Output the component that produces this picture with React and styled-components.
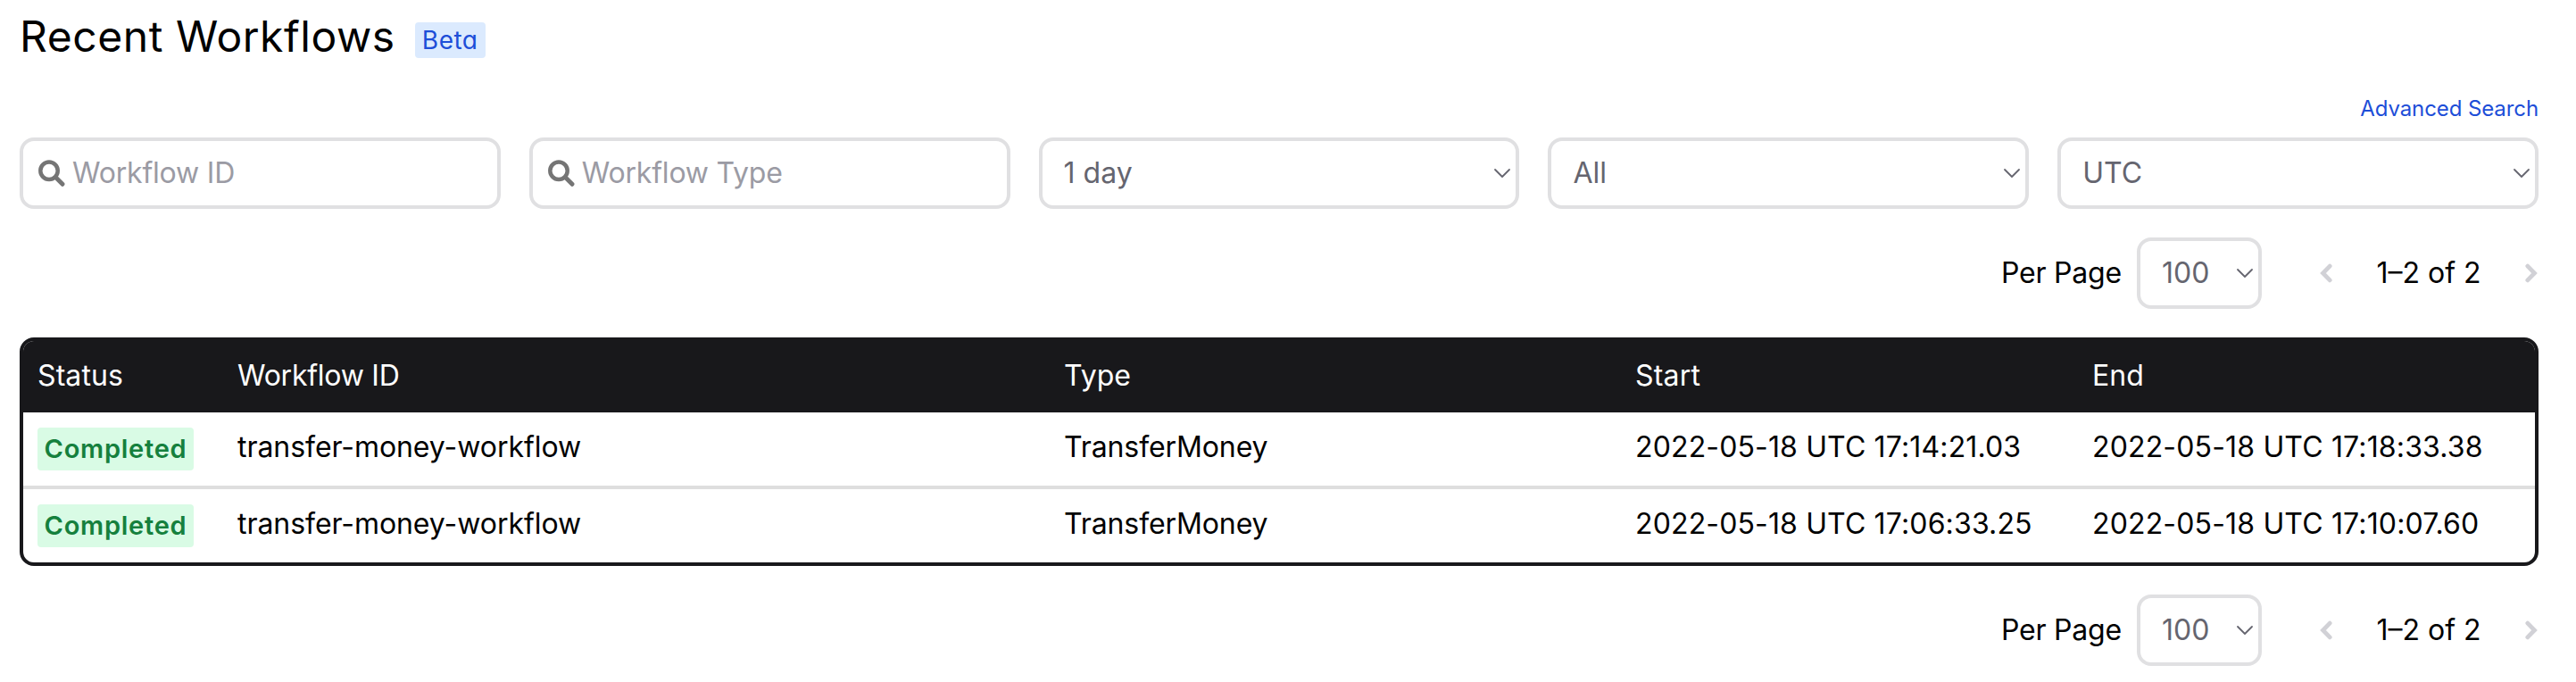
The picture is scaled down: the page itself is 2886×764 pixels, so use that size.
import React from 'react';
import styled, { createGlobalStyle } from 'styled-components';

const GlobalStyle = createGlobalStyle`
  *, *::before, *::after { box-sizing: border-box; }
  body {
    margin: 0;
    background: #fff;
    color: #000;
    font-family: Inter, 'Liberation Sans', sans-serif;
    font-size: 32px;
    line-height: 48px;
  }
`;

const Page = styled.main`
  display: flex;
  flex-direction: column;
  padding: 6px 42px 0 22px;
`;

const Header = styled.header`
  display: flex;
  align-items: center;
  gap: 22px;
  height: 72px;
`;

const Title = styled.h1`
  margin: 0;
  padding-bottom: 2px;
  font-size: 48px;
  font-weight: 430;
  line-height: 70px;
  letter-spacing: 0.55px;
  font-feature-settings: 'cv11';
`;

const Badge = styled.span`
  display: inline-flex;
  align-items: center;
  justify-content: center;
  width: ${(p) => p.$width};
  height: ${(p) => p.$height};
  border-radius: 4px;
  background: ${(p) => p.$bg};
  color: ${(p) => p.$fg};
  font-size: ${(p) => p.$size};
  font-weight: ${(p) => p.$weight};
  letter-spacing: ${(p) => p.$tracking};
  font-feature-settings: 'cv11';
`;

const BetaBadge = styled(Badge)`
  margin-top: 6px;
  padding-bottom: 1px;
`;

const LinkRow = styled.div`
  display: flex;
  justify-content: flex-end;
  height: 76px;
  padding-top: 26px;
`;

const SearchLink = styled.a`
  color: #1d4ed8;
  font-size: 24px;
  line-height: 36px;
  letter-spacing: -0.1px;
  text-decoration: none;
`;

const Filters = styled.section`
  display: grid;
  grid-template-columns: repeat(5, 1fr);
  gap: 32px;
`;

const Field = styled.div`
  display: flex;
  align-items: center;
  height: 80px;
  border: 4px solid #e0e0e2;
  border-radius: 16px;
`;

const SearchField = styled(Field)`
  gap: 8px;
  padding: 0 17px 1px;
  color: #9b9ba4;
  letter-spacing: -0.2px;
`;

const SelectField = styled(Field)`
  justify-content: space-between;
  width: ${(p) => p.$width || 'auto'};
  padding: 0 5px 0 24px;
  color: #65656f;
`;

const Pagination = styled.nav`
  display: flex;
  align-items: center;
  justify-content: flex-end;
  padding-top: 32px;
`;

const PerPage = styled.span`
  margin-right: 17px;
  padding-bottom: 1px;
  letter-spacing: -0.2px;
`;

const Pager = styled.div`
  display: flex;
  align-items: center;
  justify-content: space-between;
  width: 245px;
  margin-left: 65px;
  padding-right: 1px;
`;

const Range = styled.span`
  padding-bottom: 1px;
`;

const Table = styled.div`
  margin-top: 32px;
  overflow: hidden;
  border: 4px solid #18181b;
  border-radius: 16px;
`;

const Row = styled.div`
  display: grid;
  grid-template-columns: 224px 926px 640px 512px 1fr;
  align-items: center;
  height: 82px;
  padding-left: 16px;

  & + & + & {
    height: 86px;
    border-top: 4px solid #dedede;
  }
`;

const HeadRow = styled(Row)`
  height: 80px;
  background: #18181b;
  color: #fff;
`;

const Cell = styled.div`
  display: flex;
  align-items: center;
  padding-bottom: ${(p) => p.$lift || '0'};
  letter-spacing: ${(p) => p.$tracking || '0'};
  white-space: nowrap;
`;

const Icon = styled.svg`
  display: block;
  flex: none;
`;

const SearchIcon = () => (
  <Icon width="30" height="30" viewBox="0 0 30 30" fill="none" stroke="#757575" strokeLinecap="round">
    <circle cx="12" cy="12.300" r="9.700" strokeWidth="4.500" />
    <path d="M19.500 19.800L27 27.300" strokeWidth="4.900" />
  </Icon>
);

const Caret = () => (
  <Icon width="20" height="12" viewBox="0 0 20 12" fill="none" stroke="currentColor" strokeWidth="1.8" strokeLinecap="round" strokeLinejoin="round">
    <path d="M2 2l8 8 8-8" />
  </Icon>
);

const Arrow = ({ next }) => (
  <Icon width="14" height="22" viewBox="0 0 14 22" fill="none" stroke="#d1d1d6" strokeWidth="4.800" strokeLinecap="round" strokeLinejoin="miter">
    <path d={next ? 'M2.800 3.100L10.500 11l-7.700 7.900' : 'M11.200 3.100L3.500 11l7.700 7.900'} />
  </Icon>
);

const Select = ({ value, width }) => (
  <SelectField $width={width}>
    <span>{value}</span>
    <Caret />
  </SelectField>
);

const Paginator = () => (
  <Pagination>
    <PerPage>Per Page</PerPage>
    <Select value="100" width="140px" />
    <Pager>
      <Arrow />
      <Range>1–2 of 2</Range>
      <Arrow next />
    </Pager>
  </Pagination>
);

const workflows = [
  { start: '2022-05-18 UTC 17:14:21.03', end: '2022-05-18 UTC 17:18:33.38' },
  { start: '2022-05-18 UTC 17:06:33.25', end: '2022-05-18 UTC 17:10:07.60' },
];

export default function App() {
  return (
    <>
      <GlobalStyle />
      <Page>
        <Header>
          <Title>Recent Workflows</Title>
          <BetaBadge $width="79px" $height="40px" $bg="#dbeafe" $fg="#1d4ed8" $size="28px" $weight="430" $tracking="0.5px">Beta</BetaBadge>
        </Header>
        <LinkRow>
          <SearchLink>Advanced Search</SearchLink>
        </LinkRow>
        <Filters>
          <SearchField><SearchIcon />Workflow ID</SearchField>
          <SearchField><SearchIcon />Workflow Type</SearchField>
          <Select value="1 day" />
          <Select value="All" />
          <Select value="UTC" />
        </Filters>
        <Paginator />
        <Table>
          <HeadRow>
            <Cell $lift="2px" $tracking="0.1px">Status</Cell>
            <Cell $lift="2px" $tracking="-0.25px">Workflow ID</Cell>
            <Cell $lift="2px">Type</Cell>
            <Cell $lift="2px" $tracking="0.2px">Start</Cell>
            <Cell $lift="2px">End</Cell>
          </HeadRow>
          {workflows.map((w) => (
            <Row key={w.start}>
              <Cell>
                <Badge $width="175px" $height="48px" $bg="#d9fbe5" $fg="#15803d" $size="29px" $weight="560" $tracking="0.75px">Completed</Badge>
              </Cell>
              <Cell $lift="4px" $tracking="-0.05px">transfer-money-workflow</Cell>
              <Cell $lift="4px" $tracking="-0.1px">TransferMoney</Cell>
              <Cell $lift="4px" $tracking="0.14px">{w.start}</Cell>
              <Cell $lift="4px" $tracking="0.16px">{w.end}</Cell>
            </Row>
          ))}
        </Table>
        <Paginator />
      </Page>
    </>
  );
}
